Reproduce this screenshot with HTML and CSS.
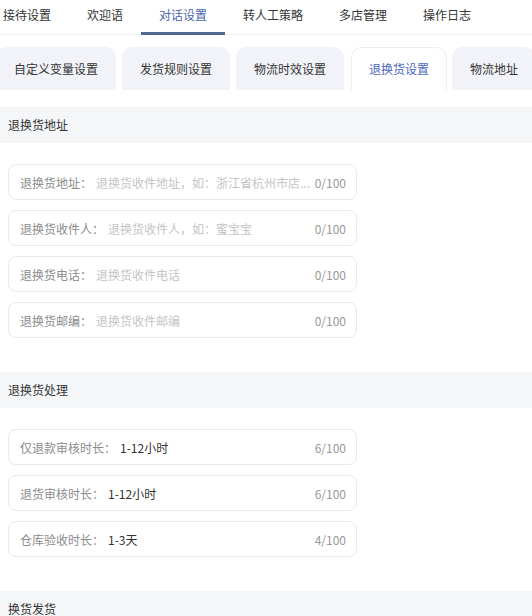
FILE: index.html
```html
<!DOCTYPE html>
<html lang="zh-CN">
<head>
<meta charset="utf-8">
<title>退换货设置</title>
<link rel="stylesheet" href="styles.css">
</head>
<body>
<div class="page">
  <nav class="main-tabs">
    <a class="main-tab">接待设置</a>
    <a class="main-tab">欢迎语</a>
    <a class="main-tab is-active">对话设置</a>
    <a class="main-tab">转人工策略</a>
    <a class="main-tab">多店管理</a>
    <a class="main-tab">操作日志</a>
  </nav>

  <div class="sub-tabs">
    <a class="sub-tab">自定义变量设置</a>
    <a class="sub-tab">发货规则设置</a>
    <a class="sub-tab">物流时效设置</a>
    <a class="sub-tab is-active">退换货设置</a>
    <a class="sub-tab">物流地址</a>
  </div>

  <section class="section">
    <h2 class="section-title">退换货地址</h2>
    <div class="fields">
      <div class="field"><span class="field-label">退换货地址：</span><span class="field-input is-placeholder">退换货收件地址，如：浙江省杭州市店...</span><span class="field-count">0/100</span></div>
      <div class="field"><span class="field-label">退换货收件人：</span><span class="field-input is-placeholder">退换货收件人，如：蜜宝宝</span><span class="field-count">0/100</span></div>
      <div class="field"><span class="field-label">退换货电话：</span><span class="field-input is-placeholder">退换货收件电话</span><span class="field-count">0/100</span></div>
      <div class="field"><span class="field-label">退换货邮编：</span><span class="field-input is-placeholder">退换货收件邮编</span><span class="field-count">0/100</span></div>
    </div>
  </section>

  <section class="section">
    <h2 class="section-title">退换货处理</h2>
    <div class="fields">
      <div class="field"><span class="field-label">仅退款审核时长：</span><span class="field-input">1-12小时</span><span class="field-count">6/100</span></div>
      <div class="field"><span class="field-label">退货审核时长：</span><span class="field-input">1-12小时</span><span class="field-count">6/100</span></div>
      <div class="field"><span class="field-label">仓库验收时长：</span><span class="field-input">1-3天</span><span class="field-count">4/100</span></div>
    </div>
  </section>

  <section class="section">
    <h2 class="section-title">换货发货</h2>
  </section>
</div>
</body>
</html>
```

FILE: styles.css
```css
html, body {
  margin: 0;
  padding: 0;
  background: #ffffff;
}

body {
  font-family: "Noto Sans CJK SC", "Noto Sans", sans-serif;
  font-size: 12px;
  color: #333333;
}

.page {
  width: 532px;
  overflow: hidden;
}

/* main tabs */
.main-tabs {
  display: flex;
  height: 34px;
  border-bottom: 1px solid #eef0f3;
  margin-left: -15px;
}

.main-tab {
  position: relative;
  padding: 0 18px;
  line-height: 30px;
  font-size: 12px;
  color: #333333;
  white-space: nowrap;
}

.main-tab.is-active {
  color: #4a66ad;
}

.main-tab.is-active::after {
  content: "";
  position: absolute;
  left: 0;
  right: 0;
  bottom: -1px;
  height: 3px;
  background: #53668f;
}

/* sub tabs */
.sub-tabs {
  display: flex;
  gap: 6px;
  margin-top: 12px;
  margin-left: -4px;
}

.sub-tab {
  flex: none;
  height: 43px;
  line-height: 43px;
  padding: 0 18px;
  border-radius: 11px 11px 0 0;
  background: #f2f3f8;
  color: #333333;
  white-space: nowrap;
  box-sizing: border-box;
}

.sub-tab.is-active {
  background: #ffffff;
  border: 1px solid #eceef3;
  border-bottom: none;
  line-height: 42px;
  padding: 0 17px;
  width: 96px;
  margin-left: 1px;
  margin-right: -1px;
  color: #4a68c0;
}

/* sections */
.section {
  margin-top: 34px;
}

.sub-tabs + .section {
  margin-top: 17px;
}

.section-title {
  margin: 0;
  height: 36px;
  line-height: 36px;
  padding-left: 8px;
  background: #f5f6f8;
  font-size: 12px;
  font-weight: normal;
  color: #333333;
}

.fields {
  display: flex;
  flex-direction: column;
  gap: 10px;
  padding: 21px 0 0 8px;
}

.field {
  display: flex;
  align-items: center;
  width: 349px;
  height: 36px;
  box-sizing: border-box;
  padding: 0 10px 0 11px;
  border: 1px solid #e8e9ec;
  border-radius: 8px;
}

.field-label {
  flex: none;
  color: #8c8c8c;
  margin-right: 4px;
}

.field-input {
  flex: 1;
  min-width: 0;
  white-space: nowrap;
  color: #333333;
}

.field-input.is-placeholder {
  color: #c4c4c6;
}

.field-count {
  flex: none;
  margin-left: 2px;
  color: #999999;
}
```
